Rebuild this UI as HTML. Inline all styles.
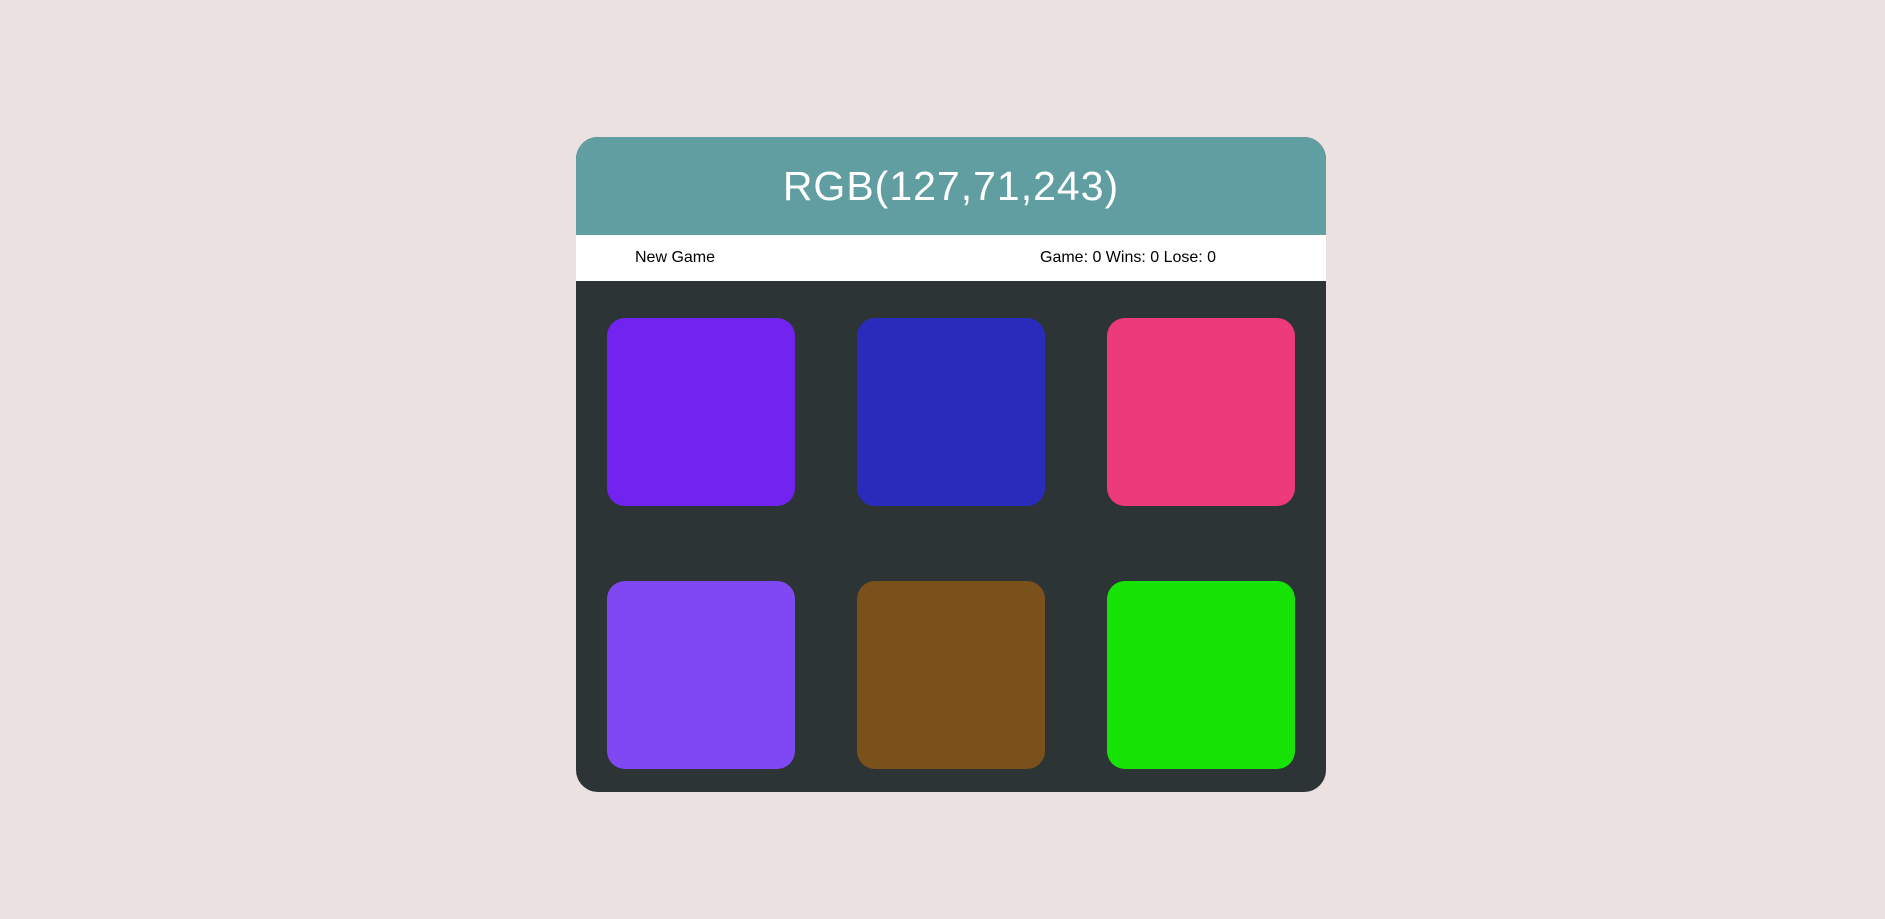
<!DOCTYPE html>
<html><head><style>
html,body{margin:0;padding:0;}
body{width:1885px;height:919px;background:#ebe1e0;position:relative;font-family:"Liberation Sans",Arial,sans-serif;overflow:hidden;}
.card{position:absolute;left:576px;top:137px;width:750px;height:655px;background:#2d3436;border-radius:22px;overflow:hidden;}
.hdr{position:absolute;left:0;top:0;width:750px;height:98px;background:#609ea1;color:#fff;font-size:41px;text-align:center;line-height:98px;letter-spacing:1px;}
.bar{position:absolute;left:0;top:98px;width:750px;height:46px;background:#fff;font-size:16px;line-height:46px;color:#000;}
.ng{position:absolute;left:59px;}
.st{position:absolute;left:464px;}
.sq{position:absolute;width:188px;height:188px;border-radius:18px;}
</style></head><body>
<div class="card">
<div class="hdr">RGB(127,71,243)</div>
<div class="bar"><span class="ng">New Game</span><span class="st">Game: 0 Wins: 0 Lose: 0</span></div>
<div class="sq" style="left:31px;top:181px;background:#7323f0"></div>
<div class="sq" style="left:281px;top:181px;background:#2a2bbb"></div>
<div class="sq" style="left:531px;top:181px;background:#ed3a7b"></div>
<div class="sq" style="left:31px;top:444px;background:#8048f2"></div>
<div class="sq" style="left:281px;top:444px;background:#7b511b"></div>
<div class="sq" style="left:531px;top:444px;background:#17e307"></div>
</div>
</body></html>
